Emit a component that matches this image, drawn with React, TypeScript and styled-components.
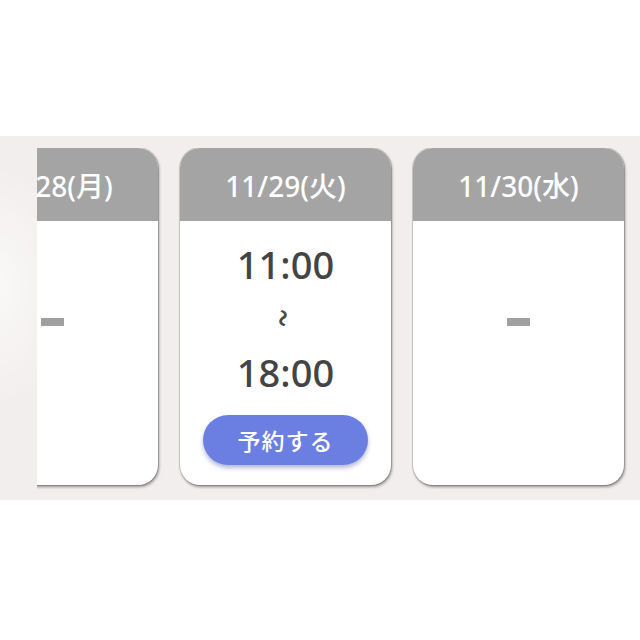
import React from 'react';
import styled, { createGlobalStyle } from 'styled-components';

type Day = {
  label: string;
  open?: string;
  close?: string;
};

const DAYS: Day[] = [
  { label: '11/28(月)' },
  { label: '11/29(火)', open: '11:00', close: '18:00' },
  { label: '11/30(水)' },
];

const GlobalStyle = createGlobalStyle`
  html, body {
    margin: 0;
    padding: 0;
    background: #ffffff;
    font-family: "Noto Sans", "Noto Sans CJK JP", sans-serif;
  }
`;

const Band = styled.section`
  margin-top: 136px;
  height: 364px;
  background:
    radial-gradient(ellipse 70px 120px at 0 150px, rgba(255, 255, 255, 0.6) 0, rgba(255, 255, 255, 0) 100%),
    #f2eeed;
  padding: 12px 0 0 37px;
  box-sizing: border-box;
`;

const Viewport = styled.div`
  overflow: hidden;
  padding-bottom: 8px;
`;

const Track = styled.div`
  display: flex;
  gap: 22px;
  margin-left: -90px;
`;

const Card = styled.article`
  flex: 0 0 211px;
  height: 337px;
  border-radius: 20px;
  background: #ffffff;
  overflow: hidden;
  display: flex;
  flex-direction: column;
  box-shadow: 0 0 0 1px rgba(0, 0, 0, 0.14), 1px 2px 3px rgba(0, 0, 0, 0.4);
`;

const Header = styled.header`
  height: 73px;
  flex: 0 0 73px;
  background: #a4a4a4;
  color: #ffffff;
  font-size: 28px;
  font-weight: 500;
  display: flex;
  align-items: center;
  justify-content: center;
  white-space: nowrap;
`;

const Body = styled.div<{ $empty?: boolean }>`
  flex: 1;
  display: flex;
  flex-direction: column;
  align-items: center;
  justify-content: ${({ $empty }) => ($empty ? 'center' : 'flex-start')};
  padding-top: ${({ $empty }) => ($empty ? '0' : '17px')};
  padding-bottom: ${({ $empty }) => ($empty ? '62px' : '0')};
`;

const Time = styled.div`
  font-size: 38px;
  font-weight: 500;
  line-height: 52px;
  color: #444444;
`;

const Between = styled.div`
  height: 56px;
  display: flex;
  align-items: center;
  justify-content: center;
  color: #4a4a4a;
  font-family: "Noto Sans CJK JP", sans-serif;
  font-size: 22px;
  font-weight: 700;

  span {
    display: inline-block;
    transform: rotate(90deg) scaleX(0.8);
  }
`;

const Dash = styled.div`
  width: 23px;
  height: 8px;
  background: #a0a0a0;
`;

const ReserveButton = styled.button`
  margin-top: 17px;
  width: 165px;
  height: 50px;
  border: none;
  border-radius: 25px;
  background: #6b7fe2;
  color: #ffffff;
  font-family: "Noto Sans CJK JP", sans-serif;
  font-size: 23px;
  font-weight: 500;
  letter-spacing: 1px;
  box-shadow: 0 3px 4px rgba(40, 60, 150, 0.35);
  cursor: pointer;
`;

const DayCard = ({ label, open, close }: Day) => (
  <Card>
    <Header>{label}</Header>
    {open ? (
      <Body>
        <Time>{open}</Time>
        <Between>
          <span>〜</span>
        </Between>
        <Time>{close}</Time>
        <ReserveButton>予約する</ReserveButton>
      </Body>
    ) : (
      <Body $empty>
        <Dash />
      </Body>
    )}
  </Card>
);

export default function App() {
  return (
    <>
      <GlobalStyle />
      <Band>
        <Viewport>
          <Track>
            {DAYS.map((d) => (
              <DayCard key={d.label} {...d} />
            ))}
          </Track>
        </Viewport>
      </Band>
    </>
  );
}
